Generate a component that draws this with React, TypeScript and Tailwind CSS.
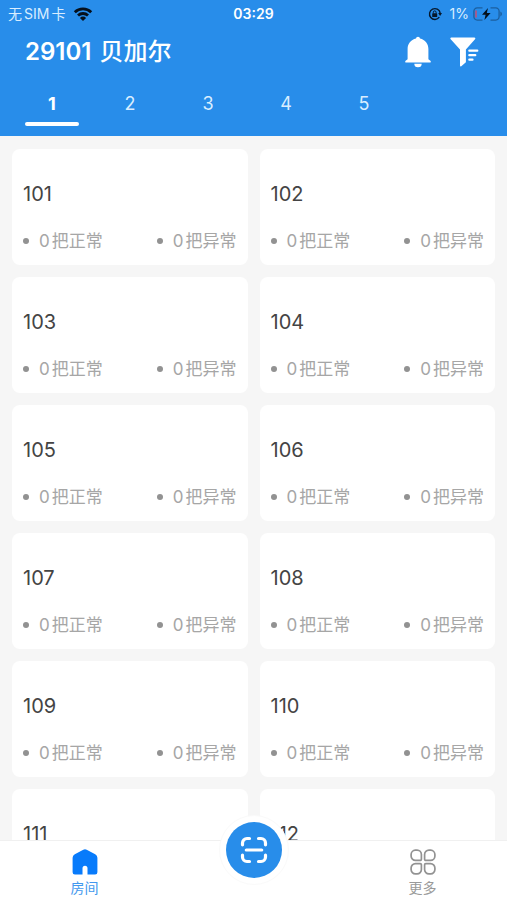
import { useState } from 'react';

const floors = [1, 2, 3, 4, 5];

const rooms = Array.from({ length: 12 }, (_, i) => ({
  name: String(101 + i),
  normal: 0,
  abnormal: 0,
}));

function WifiIcon() {
  return (
    <svg width="20" height="16" viewBox="0 0 20 16" fill="none" stroke="#06101c" strokeWidth="2.8" aria-hidden="true">
      <path d="M1.8 6.2a11.8 11.8 0 0 1 16.4 0" />
      <path d="M5 9.5a7.2 7.2 0 0 1 10 0" />
      <path d="M10 15 6.9 11.9a4.4 4.4 0 0 1 6.2 0Z" fill="#06101c" stroke="none" />
    </svg>
  );
}

function RotationLockIcon() {
  return (
    <svg width="14" height="14" viewBox="0 0 14 14" fill="none" stroke="#06182c" aria-hidden="true">
      <path d="M11.3 10.2A5.4 5.4 0 1 1 12.2 6" strokeWidth="1.4" />
      <path d="M10.2 6h3.8l-1.9 3Z" fill="#06182c" stroke="none" />
      <rect x="4.2" y="6.3" width="5" height="3.8" rx="0.6" fill="#06182c" stroke="none" />
      <path d="M5.3 6.5V5.3a1.4 1.4 0 0 1 2.8 0v1.2" strokeWidth="1" />
    </svg>
  );
}

function BatteryIcon() {
  return (
    <svg width="30" height="14" viewBox="0 0 30 14" fill="none" aria-hidden="true">
      <path d="M9.5.9H4.2A3.3 3.3 0 0 0 .9 4.2v5.6a3.3 3.3 0 0 0 3.3 3.300h5.300M17.500.9h5.300a3.300 3.300 0 0 1 3.300 3.300v5.600a3.300 3.300 0 0 1-3.300 3.300h-5.300" stroke="#1b5f9f" strokeWidth="1.3" />
      <path d="M27.3 4.6c2.200.8 2.200 4 0 4.800Z" fill="#1b5f9f" />
      <path d="M3 4v6" stroke="#c0517a" strokeWidth="1.6" strokeLinecap="round" />
      <path d="M15 1 9 7.800h3.600L11.400 13l6.200-6.900h-3.800Z" fill="#04101d" />
    </svg>
  );
}

function BellIcon() {
  return (
    <svg width="26" height="32" viewBox="0 0 26 32" fill="white" aria-hidden="true">
      <path d="M13 .8c1 0 1.800.8 2 1.800 5.200 1.200 8.400 5.200 8.400 10.400v10.200l2 1.600c.8.8.4 1.800-.7 1.800H1.300C.2 26.600-.2 25.600.6 24.800l2-1.600V13C2.600 7.800 5.800 3.800 11 2.600 11.200 1.600 12 .8 13 .8Z" />
      <path d="M9.300 27.800h7.400a3.700 3.500 0 0 1-7.400 0Z" />
    </svg>
  );
}

function FilterIcon() {
  return (
    <svg width="30" height="32" viewBox="0 0 30 32" fill="white" aria-hidden="true">
      <path d="M2.300 1.500h23c1 0 1.400 1 .7 1.800L16.900 13.400v12.800l-4.600 4.100c-.7.5-1.300.1-1.300-.7V13.400L1.700 3.300C1 2.500 1.400 1.500 2.300 1.500Z" />
      <path d="M20.300 14.700h8M20.300 19.200h6M20.300 23.700h3.200" stroke="white" strokeWidth="2.200" strokeLinecap="round" />
    </svg>
  );
}

function HomeIcon() {
  return (
    <svg width="26" height="26" viewBox="0 0 26 26" fill="#087bfb" aria-hidden="true">
      <path d="M11.300.7a3.500 3.500 0 0 1 3.400 0L23.200 5.300A4 4 0 0 1 25.400 8.800v14.500a2.300 2.300 0 0 1-2.300 2.300h-7.600v-6.300a2.500 2.500 0 0 0-5 0v6.300H2.900A2.300 2.300 0 0 1 .6 23.300V8.800A4 4 0 0 1 2.800 5.300Z" />
    </svg>
  );
}

// Four petals, each with its tighter corner towards the middle.
function MoreIcon() {
  return (
    <svg width="26" height="26" viewBox="0 0 26 26" fill="none" stroke="#929292" strokeWidth="1.700" aria-hidden="true">
      <path d="M5.300 1.200h1.800a4.300 4.300 0 0 1 4.300 4.300v4.700a1.200 1.200 0 0 1-1.200 1.200H5.500a4.400 4.400 0 0 1-4.400-4.400V5.500a4.300 4.300 0 0 1 4.200-4.300Z" />
      <path d="M18.900 1.200h1.800a4.300 4.300 0 0 1 4.200 4.300V7a4.400 4.400 0 0 1-4.400 4.400h-4.700a1.200 1.200 0 0 1-1.200-1.200V5.500a4.300 4.300 0 0 1 4.300-4.300Z" />
      <path d="M5.500 14.600h4.700a1.200 1.200 0 0 1 1.200 1.200v4.700a4.300 4.300 0 0 1-4.300 4.300H5.400a4.300 4.300 0 0 1-4.300-4.300V19a4.400 4.400 0 0 1 4.400-4.400Z" />
      <path d="M15.800 14.600h4.700a4.400 4.400 0 0 1 4.400 4.400v1.500a4.300 4.300 0 0 1-4.300 4.300h-1.700a4.300 4.300 0 0 1-4.300-4.300v-4.700a1.200 1.200 0 0 1 1.200-1.200Z" />
    </svg>
  );
}

function ScanIcon() {
  return (
    <svg width="28" height="28" viewBox="0 0 28 28" fill="none" stroke="white" strokeWidth="3.200" strokeLinecap="round" aria-hidden="true">
      <path d="M2.500 8.800V7a4.500 4.500 0 0 1 4.500-4.500h2.500M18.500 2.500H21a4.500 4.500 0 0 1 4.500 4.500v1.800M25.500 19.200V21a4.500 4.500 0 0 1-4.500 4.500h-2.500M9.500 25.500H7A4.500 4.500 0 0 1 2.500 21v-1.800" />
      <path d="M6.300 14h15.400" />
    </svg>
  );
}

// One lock counter: grey dot, then the number and its label.
function LockCount({ count, label }: { count: number; label: string }) {
  return (
    <span className="flex items-center gap-2.5">
      <span className="size-1.5 rounded-full bg-[#929292]" />
      <span className="flex gap-0.5">
        <span>{count}</span>
        <span>{label}</span>
      </span>
    </span>
  );
}

export default function App() {
  const [floor, setFloor] = useState(1);

  return (
    <div className="flex h-screen flex-col overflow-hidden bg-[#f6f6f6] font-['Inter','Noto_Sans_CJK_SC',sans-serif]">
      <header className="shrink-0 bg-[#288dea] text-white">
        {/* Status bar */}
        <div className="grid h-7 grid-cols-3 items-center px-2 text-sm leading-5">
          <div className="flex items-center gap-2">
            <span className="flex gap-0.5 text-[#d9edff]">
              <span>无</span>
              <span>SIM</span>
              <span>卡</span>
            </span>
            <WifiIcon />
          </div>
          <span className="text-center font-semibold">03:29</span>
          <div className="-mr-1 flex items-center justify-end gap-1">
            <RotationLockIcon />
            <span className="ml-1 text-[#d9edff]">1%</span>
            <BatteryIcon />
          </div>
        </div>

        <div className="flex h-12 items-center justify-between pr-7 pl-[25px]">
          <h1 className="flex gap-2 text-2xl font-semibold">
            <span>29101</span>
            <span className="font-medium">贝加尔</span>
          </h1>
          <div className="flex gap-[18px]">
            <button type="button" aria-label="通知">
              <BellIcon />
            </button>
            <button type="button" aria-label="筛选">
              <FilterIcon />
            </button>
          </div>
        </div>

        {/* Floor tabs */}
        <nav className="flex h-15 px-[13px]">
          {floors.map((n) => (
            <button
              key={n}
              type="button"
              onClick={() => setFloor(n)}
              className={`flex w-[78px] flex-col items-center gap-1 pt-3.5 text-lg ${n === floor ? 'font-bold' : 'text-[#d9edff]'}`}
            >
              <span>{n}</span>
              {n === floor && <span className="h-1 w-[54px] rounded-full bg-white" />}
            </button>
          ))}
        </nav>
      </header>

      <main className="min-h-0 flex-1 overflow-hidden px-3 pt-[13px]">
        <ul className="grid grid-cols-2 gap-3">
          {rooms.map((room) => (
            <li key={room.name} className="flex h-29 flex-col justify-between rounded-lg bg-white px-[11px] pt-[31px] pb-3">
              <h2 className="text-xl leading-7 text-[#444444]">{room.name}</h2>
              <div className="flex justify-between text-[17px] leading-6 text-[#a6a6a6]">
                <LockCount count={room.normal} label="把正常" />
                <LockCount count={room.abnormal} label="把异常" />
              </div>
            </li>
          ))}
        </ul>
      </main>

      <footer className="relative grid h-15 shrink-0 grid-cols-3 border-t border-[#f0f0f0] bg-white text-sm leading-5">
        <button type="button" className="flex flex-col items-center gap-[3px] pt-2 text-[#4298ee]">
          <HomeIcon />
          <span>房间</span>
        </button>
        {/* The scan button rises above the bar */}
        <button
          type="button"
          aria-label="扫一扫"
          className="absolute -top-[26px] left-1/2 flex size-[70px] -translate-x-1/2 items-center justify-center rounded-full border border-[#fafafa] bg-white"
        >
          <span className="flex size-14 items-center justify-center rounded-full bg-[#288dea]">
            <ScanIcon />
          </span>
        </button>
        <button type="button" className="col-start-3 flex flex-col items-center gap-[3px] pt-2 text-[#9a9a9a]">
          <MoreIcon />
          <span>更多</span>
        </button>
      </footer>
    </div>
  );
}
